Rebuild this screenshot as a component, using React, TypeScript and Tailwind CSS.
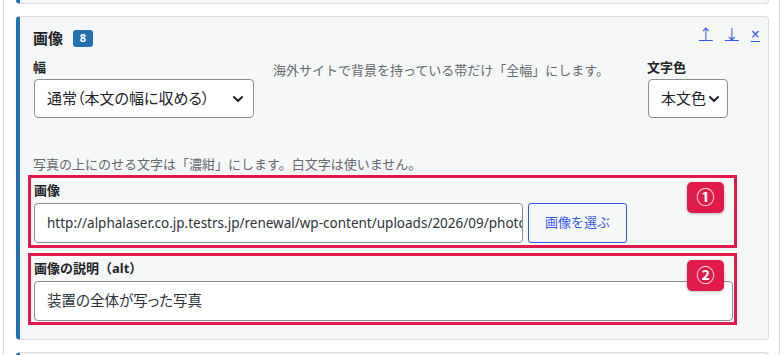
import React from "react";

const Chevron = ({ className = "" }: { className?: string }) => (
  <svg viewBox="0 0 12 8" className={className} fill="none" stroke="#1d2327" strokeWidth="2" strokeLinecap="round" strokeLinejoin="round">
    <path d="M2 2l4 4 4-4" />
  </svg>
);

export default function App() {
  return (
    <div className="w-[784px] h-[355px] overflow-hidden bg-white font-['Segoe_UI','Noto_Sans','Noto_Sans_CJK_JP',sans-serif] text-[#1d2327]">
      <div className="ml-[3px] w-[777px] h-[355px] border-x border-[#dcdcde] pl-[12px] pr-[10px]">
        {/* previous card tail */}
        <div className="h-[4px] border-b border-r border-l-4 border-[#dcdcde] border-l-[#2271b1] bg-[#f6f7f7] rounded-b-[4px]" />
        {/* card */}
        <div className="relative mt-[12px] h-[324px] border border-l-4 border-[#dcdcde] border-l-[#2271b1] bg-[#f6f7f7] rounded-[4px] pl-[13px] pt-[13px]">
          <div className="absolute top-[6px] right-[8px] flex items-center gap-[12px] text-[14px] text-[#3858e9]">
            <span className="underline">↑</span>
            <span className="underline">↓</span>
            <span className="underline text-[16px] leading-[20px]">×</span>
          </div>
          {/* header */}
          <div className="flex items-center h-[17px]">
            <span className="text-[15px] font-bold leading-[17px]">画像</span>
            <span className="ml-[10px] w-[20px] h-[17px] rounded-[3px] bg-[#2271b1] text-white text-[11px] font-bold flex items-center justify-center">8</span>
          </div>
          {/* row */}
          <div className="mt-[11px] flex items-start">
            <div className="w-[221px]">
              <div className="text-[13px] leading-[19px] font-bold">幅</div>
              <div className="mt-[2px] ml-[1px] h-[39px] w-[220px] rounded-[4px] border border-[#8c8f94] bg-white flex items-center pl-[12px] pr-[9px]">
                <span className="flex-1 text-[15px] text-[#1d2327] [font-feature-settings:'palt']">通常（本文の幅に収める）</span>
                <Chevron className="w-[12px] h-[8px]" />
              </div>
            </div>
            <div className="ml-[19px] w-[355px] mt-[3px] text-[13px] leading-[19px] text-[#646970]">
              海外サイトで背景を持っている帯だけ「全幅」にします。
            </div>
            <div className="ml-[19px] w-[81px]">
              <div className="text-[13px] leading-[19px] font-bold">文字色</div>
              <div className="mt-[2px] ml-[1px] h-[39px] w-[80px] rounded-[4px] border border-[#8c8f94] bg-white flex items-center pl-[12px]">
                <span className="text-[15px]">本文色</span>
                <Chevron className="w-[12px] h-[8px] ml-[2px]" />
              </div>
            </div>
          </div>
          <div className="mt-[37px] text-[13px] leading-[19px] text-[#646970]">
            写真の上にのせる文字は「濃紺」にします。白文字は使いません。
          </div>
          {/* field 1 */}
          <div className="relative mt-[1px] ml-[-5px] w-[709px] border-[3px] border-[#e01b4b] pl-[3px] pr-[1px] pt-[3px] pb-[2px]">
            <div className="text-[13px] leading-[19px] font-bold">画像</div>
            <div className="mt-[3px] flex items-center">
              <div className="h-[40px] w-[489px] rounded-[4px] border border-[#8c8f94] bg-white flex items-center pl-[12px] pr-[2px] overflow-hidden whitespace-nowrap">
                <span className="text-[13.5px] text-[#2c3338]">http://alphalaser.co.jp.testrs.jp/renewal/wp-content/uploads/2026/09/photo</span>
              </div>
              <div className="ml-[5px] h-[40px] w-[99px] rounded-[3px] border border-[#3858e9] bg-[#f6f7f7] flex items-center justify-center text-[13px] text-[#3858e9]">
                画像を選ぶ
              </div>
            </div>
            <div className="absolute top-[4px] right-[10px] w-[37px] h-[31px] rounded-[5px] bg-[#e01b4b] shadow-[0_1px_3px_rgba(0,0,0,0.25)] flex items-center justify-center text-white text-[18px] font-bold">
              ①
            </div>
          </div>
          {/* field 2 */}
          <div className="relative mt-[5px] ml-[-5px] w-[709px] border-[3px] border-[#e01b4b] pl-[3px] pr-[1px] pt-[3px] pb-[1px]">
            <div className="text-[13px] leading-[19px] font-bold">画像の説明（alt）</div>
            <div className="mt-[3px] h-[40px] w-[699px] rounded-[4px] border border-[#8c8f94] bg-white flex items-center pl-[12px]">
              <span className="text-[14.5px] text-[#2c3338] [font-feature-settings:'palt']">装置の全体が写った写真</span>
            </div>
            <div className="absolute top-[4px] right-[10px] w-[37px] h-[31px] rounded-[5px] bg-[#e01b4b] shadow-[0_1px_3px_rgba(0,0,0,0.25)] flex items-center justify-center text-white text-[18px] font-bold">
              ②
            </div>
          </div>
        </div>
        {/* next card head */}
        <div className="mt-[12px] h-[20px] border-t border-r border-l-4 border-[#dcdcde] border-l-[#2271b1] bg-[#f6f7f7] rounded-t-[4px]" />
      </div>
    </div>
  );
}
